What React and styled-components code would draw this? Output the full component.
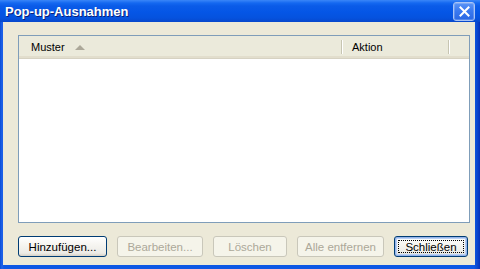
import React from 'react';
import styled, { createGlobalStyle } from 'styled-components';

const GlobalStyle = createGlobalStyle`
  html, body {
    margin: 0;
    padding: 0;
    overflow: hidden;
  }
  body {
    font-family: "Liberation Sans", Arial, sans-serif;
    font-size: 11px;
  }
`;

const Window = styled.div`
  width: 480px;
  height: 269px;
  display: flex;
  flex-direction: column;
  background: linear-gradient(to right, #0A4CD6 0, #1F62E8 2px, #0D57E4 4px, #0D57E4 474px, #0A48D0 477px, #0631B8 480px);
  box-sizing: border-box;
`;

const TitleBar = styled.div`
  height: 22px;
  flex: none;
  display: flex;
  align-items: center;
  padding: 0 5px 0 5px;
  background: linear-gradient(
    to bottom,
    #3A86F8 0,
    #1468F0 3px,
    #0A5BE8 6px,
    #0556E6 12px,
    #0552DE 18px,
    #0748CC 22px
  );
`;

const Title = styled.span`
  color: #fff;
  font-weight: bold;
  font-size: 13px;
  text-shadow: 1px 1px 0 #0A1F7A;
  margin-top: 1px;
`;

const CloseButton = styled.div`
  margin-left: auto;
  width: 22px;
  height: 19px;
  margin-top: 1px;
  box-sizing: border-box;
  border: 1px solid #A9C4F5;
  border-radius: 3px;
  background: linear-gradient(to bottom, #5C95F6 0, #3B7AF0 45%, #2A68E4 100%);
  display: flex;
  align-items: center;
  justify-content: center;
  box-shadow: inset 0 0 0 1px rgba(255, 255, 255, 0.2);
`;

const Body = styled.div`
  flex: 1;
  margin: 0 5px 4px 3px;
  background: #ECE9D8;
  display: flex;
  flex-direction: column;
  padding: 13px 5px 8px 15px;
  min-height: 0;
`;

const ListBox = styled.div`
  flex: 1;
  border: 1px solid #7F9DB9;
  background: #fff;
  display: flex;
  flex-direction: column;
`;

const Header = styled.div`
  height: 23px;
  display: flex;
  background: #EBEADB;
  box-shadow: inset 0 -1px 0 #D6D2C2, inset 0 -2px 0 #E2DECD, inset 0 -3px 0 #E2DECD;
`;

const HeaderCell = styled.div`
  width: ${({ $w }) => $w}px;
  flex: ${({ $fill }) => ($fill ? 1 : 'none')};
  display: flex;
  align-items: center;
  padding-left: ${({ $pad }) => $pad}px;
  box-sizing: border-box;
  color: #000;
  position: relative;
  padding-bottom: 2px;

  &::after {
    content: ${({ $sep }) => ($sep ? "''" : 'none')};
    position: absolute;
    right: 0;
    top: 4px;
    bottom: 5px;
    width: 1px;
    background: #C7C5B2;
    box-shadow: 1px 0 0 #fff;
  }
`;

const SortArrow = styled.span`
  width: 0;
  height: 0;
  border-left: 5px solid transparent;
  border-right: 5px solid transparent;
  border-bottom: 5px solid #ACA899;
  margin-left: 10px;
  margin-top: 1px;
`;

const ButtonRow = styled.div`
  display: flex;
  gap: 10px;
  margin-top: 13px;
`;

const Button = styled.button`
  width: ${({ $w }) => $w}px;
  height: 21px;
  padding: 0;
  font-family: "Liberation Sans", Arial, sans-serif;
  font-size: 11.5px;
  border-radius: 3px;
  box-sizing: border-box;
  border: 1px solid ${({ disabled }) => (disabled ? '#C9C7BA' : '#003C74')};
  color: ${({ disabled }) => (disabled ? '#ACA899' : '#000')};
  background: ${({ disabled }) =>
    disabled
      ? '#F5F4EA'
      : 'linear-gradient(to bottom, #FFFFFF 0, #F6F5F1 40%, #ECEBE6 85%, #D6D0C5 100%)'};
  box-shadow: ${({ $default }) =>
    $default ? 'inset 0 0 0 1px #96B4E9, inset 0 0 0 2px #B9D0F5' : 'none'};
  position: relative;
  display: flex;
  align-items: center;
  justify-content: center;

  &::after {
    content: ${({ $focus }) => ($focus ? "''" : 'none')};
    position: absolute;
    inset: 3px;
    border: 1px dotted #000;
  }
`;

export default function App() {
  return (
    <>
      <GlobalStyle />
      <Window>
        <TitleBar>
          <Title>Pop-up-Ausnahmen</Title>
          <CloseButton>
            <svg width="11" height="11" viewBox="0 0 11 11">
              <path d="M1.5 1.5 L9.5 9.5 M9.5 1.5 L1.5 9.5" stroke="#fff" strokeWidth="2" strokeLinecap="square" />
            </svg>
          </CloseButton>
        </TitleBar>
        <Body>
          <ListBox>
            <Header>
              <HeaderCell $w={323} $pad={12} $sep>
                Muster
                <SortArrow />
              </HeaderCell>
              <HeaderCell $w={107} $pad={10} $sep>
                Aktion
              </HeaderCell>
              <HeaderCell $fill />
            </Header>
          </ListBox>
          <ButtonRow>
            <Button $w={89}>Hinzufügen...</Button>
            <Button $w={86} disabled>Bearbeiten...</Button>
            <Button $w={74} disabled>Löschen</Button>
            <Button $w={87} disabled>Alle entfernen</Button>
            <Button $w={74} $default $focus>Schließen</Button>
          </ButtonRow>
        </Body>
      </Window>
    </>
  );
}
